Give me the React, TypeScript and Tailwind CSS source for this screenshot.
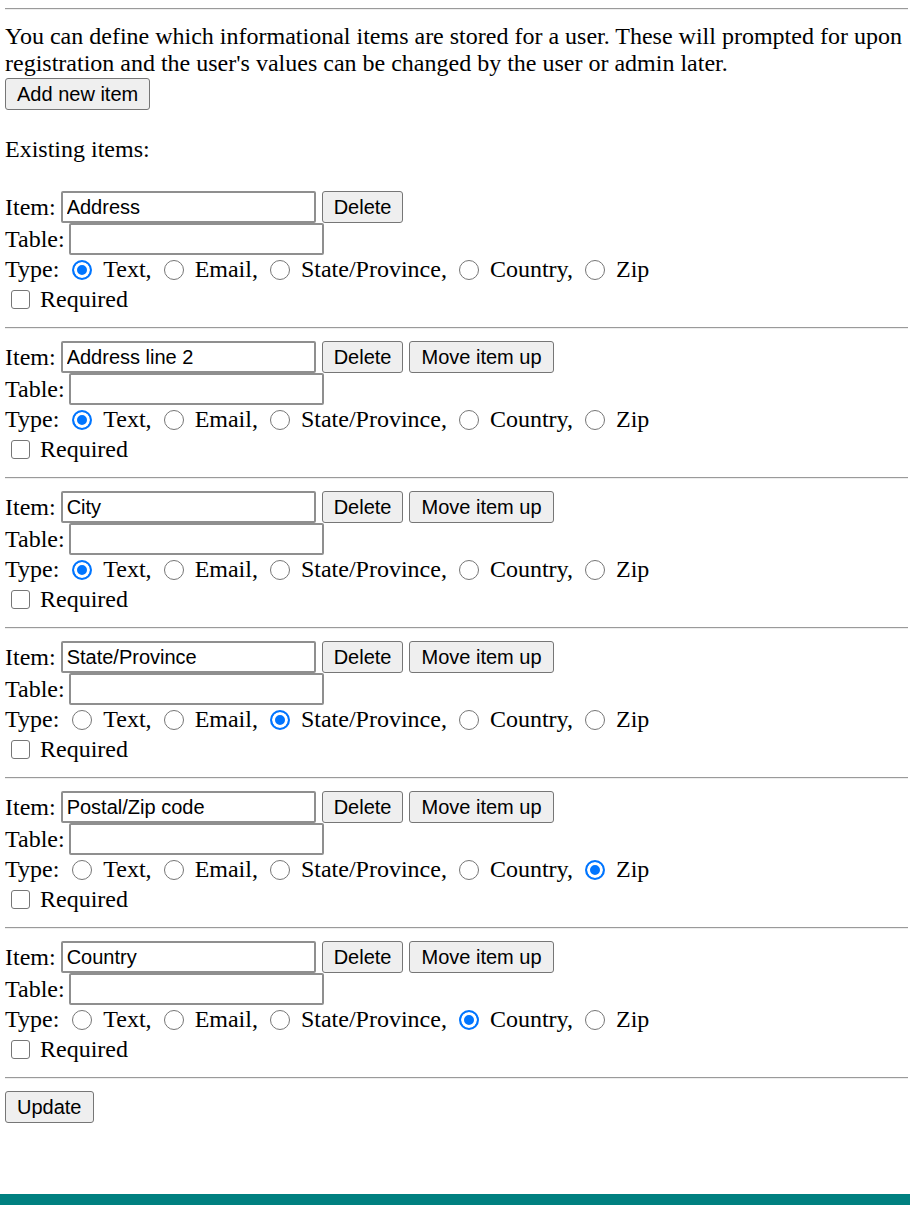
import React from "react";

type Item = {
  name: string;
  type: string;
  canMoveUp: boolean;
};

const items: Item[] = [
  { name: "Address", type: "text", canMoveUp: false },
  { name: "Address line 2", type: "text", canMoveUp: true },
  { name: "City", type: "text", canMoveUp: true },
  { name: "State/Province", type: "state", canMoveUp: true },
  { name: "Postal/Zip code", type: "zip", canMoveUp: true },
  { name: "Country", type: "country", canMoveUp: true },
];

const types = [
  { value: "text", label: "Text," },
  { value: "email", label: "Email," },
  { value: "state", label: "State/Province," },
  { value: "country", label: "Country," },
  { value: "zip", label: "Zip" },
];

const btn =
  "h-[32px] px-[11px] bg-[#efefef] border border-[#767676] rounded-[3px] text-[20px] leading-none text-black font-['Liberation_Sans',Arial,sans-serif]";

const field =
  "h-[32px] w-[255px] px-[4px] bg-white border-2 border-[#8f8f8f] rounded-[2px] text-[20px] text-black font-['Liberation_Sans',Arial,sans-serif] outline-none";

function Rule() {
  return <div className="h-[2px] border-t border-t-[#9a9a9a] border-b border-b-[#eeeeee]" />;
}

function ItemBlock({ item, idx }: { item: Item; idx: number }) {
  return (
    <div>
      {/* Item name + actions */}
      <div className="h-[32px] flex items-center">
        <span>Item:</span>
        <input className={`${field} ml-[5px]`} defaultValue={item.name} />
        <button className={`${btn} ml-[6px]`}>Delete</button>
        {item.canMoveUp && <button className={`${btn} ml-[6px]`}>Move item up</button>}
      </div>
      <div className="h-[32px] flex items-center">
        <span>Table:</span>
        <input className={`${field} ml-[4px]`} defaultValue="" />
      </div>
      <div className="h-[29px] flex items-center">
        <span className="pr-[1px]">Type:</span>
        {types.map((t) => (
          <label key={t.value} className="flex items-center">
            <input
              type="radio"
              name={`type-${idx}`}
              defaultChecked={item.type === t.value}
              className="appearance-none ml-[12px] w-[20px] h-[20px] rounded-full bg-white border border-[#767676] checked:border-2 checked:border-[#0075ff] checked:bg-[#0075ff] checked:shadow-[inset_0_0_0_3px_white]"
            />
            <span className="ml-[11px]">{t.label}</span>
          </label>
        ))}
      </div>
      <div className="h-[30px] flex items-center">
        <label className="flex items-center">
          <input
            type="checkbox"
            className="appearance-none ml-[6px] w-[19px] h-[19px] rounded-[3px] bg-white border border-[#767676]"
          />
          <span className="ml-[10px]">Required</span>
        </label>
      </div>
      <div className="mt-[13px]">
        <Rule />
      </div>
    </div>
  );
}

export default function App() {
  return (
    <div className="bg-white text-black text-[24px] leading-[normal] font-['Liberation_Serif','Times_New_Roman',serif]">
      <div className="pl-[5px] pr-[2px] pt-[8px]">
        <Rule />
        <p className="mt-[13px]">
          You can define which informational items are stored for a user. These will prompted for upon
          registration and the user's values can be changed by the user or admin later.
        </p>
        <button className={`${btn} block mt-[1px]`}>Add new item</button>
        <p className="mt-[26px]">Existing items:</p>

        <div className="mt-[28px] flex flex-col gap-[12px]">
          {items.map((it, i) => (
            <ItemBlock key={it.name} item={it} idx={i} />
          ))}
        </div>

        <button className={`${btn} block mt-[12px]`}>Update</button>
      </div>
      <div className="mt-[71px] h-[12px] bg-[#008080]" />
    </div>
  );
}
